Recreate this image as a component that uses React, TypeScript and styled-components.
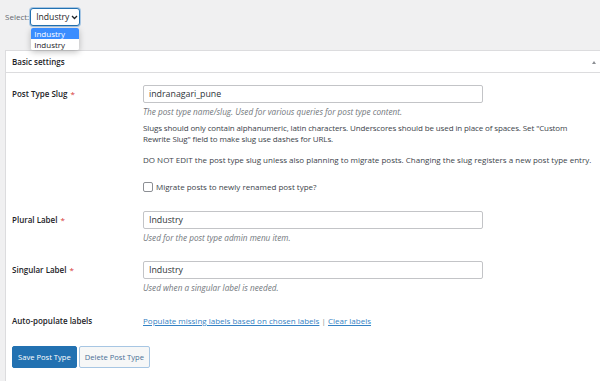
import React from 'react';
import styled, {createGlobalStyle} from 'styled-components';

const Global = createGlobalStyle`
	html, body {
		margin: 0;
		padding: 0;
		background: #f0f0f1;
	}
	body {
		font-family: 'Open Sans', 'Noto Sans', sans-serif;
		font-size: 8px;
		color: #1d2327;
	}
`;

const Page = styled.div`
	width: 600px;
	height: 381px;
	overflow: hidden;
	display: flex;
	flex-direction: column;
`;

const TopBar = styled.div`
	display: flex;
	gap: 1px;
	height: 50px;
	padding: 8px 0 0 5px;
	box-sizing: border-box;
	align-items: flex-start;
	color: #646970;
`;

const SelectLabel = styled.span`
	line-height: 18px;
`;

const SelectWrap = styled.div`
	position: relative;
`;

const SelectBox = styled.div`
	width: 50px;
	height: 18px;
	box-sizing: border-box;
	border: 1px solid #2271b1;
	box-shadow: 0 0 0 1px #a7c6e3;
	border-radius: 3px;
	background: #fff;
	display: flex;
	align-items: center;
	gap: 2px;
	padding: 0 0 0 5px;
	color: #1d2327;
	font-size: 8.6px;
`;

const DropList = styled.ul`
	position: absolute;
	top: 20px;
	left: 1px;
	width: 48px;
	margin: 0;
	padding: 0;
	list-style: none;
	background: #fff;
	box-shadow: 0 2px 6px rgba(0, 0, 0, 0.25);
	border-radius: 2px;
	z-index: 5;
	overflow: hidden;
`;

const DropItem = styled.li<{$active?: boolean}>`
	height: 11px;
	line-height: 11px;
	padding-left: 3px;
	background: ${p => (p.$active ? '#3a8dff' : '#fff')};
	color: ${p => (p.$active ? '#fff' : '#1d2327')};
`;

const Panel = styled.div`
	flex: 1;
	margin-left: 5px;
	background: #fff;
	border-top: 1px solid #dcdcde;
	border-left: 1px solid #dcdcde;
`;

const PanelHead = styled.div`
	height: 21px;
	display: flex;
	align-items: center;
	justify-content: space-between;
	padding: 0 4px 0 6px;
	border-bottom: 1px solid #dcdcde;
	font-weight: 600;
`;

const Toggle = styled.span`
	width: 0;
	height: 0;
	border-left: 2.5px solid transparent;
	border-right: 2.5px solid transparent;
	border-bottom: 3px solid #8c8f94;
	margin-top: 1px;
`;

const Body = styled.div`
	padding: 12px 6px 0 6px;
`;

const Row = styled.div<{$gap?: number}>`
	display: grid;
	grid-template-columns: 131px 1fr;
	align-items: start;
	margin-bottom: ${p => p.$gap ?? 0}px;
`;

const Label = styled.div`
	font-weight: 600;
	line-height: 18px;
`;

const Req = styled.span`
	color: #d63638;
	margin-left: 3px;
	font-weight: 400;
`;

const Field = styled.div`
	display: flex;
	flex-direction: column;
	align-items: flex-start;
`;

const TextInput = styled.div`
	width: 340px;
	height: 18px;
	box-sizing: border-box;
	border: 1px solid #c3c4c7;
	border-radius: 2px;
	padding: 0 5px;
	line-height: 16px;
	font-size: 8.8px;
	color: #2c3338;
`;

const Desc = styled.p`
	margin: 3px 0 0;
	font-style: italic;
	font-size: 8.2px;
	color: #72777c;
	line-height: 12px;
`;

const Note = styled.p<{$mt: number; $tight?: boolean}>`
	margin: ${p => p.$mt}px 0 0;
	line-height: 11px;
	color: #3c434a;
	white-space: nowrap;
	letter-spacing: ${p => (p.$tight ? '-0.12px' : '0')};
`;

const Check = styled.label`
	display: flex;
	align-items: center;
	gap: 3px;
	margin-top: 16px;
	line-height: 12px;
	color: #3c434a;
`;

const Box = styled.span`
	width: 8px;
	height: 8px;
	border: 1px solid #8c8f94;
	border-radius: 2px;
	background: #fff;
`;

const Links = styled.div`
	line-height: 18px;
	color: #8c8f94;
`;

const A = styled.a`
	color: #3582c4;
	text-decoration: underline;
`;

const Buttons = styled.div`
	display: flex;
	gap: 2px;
	margin-top: 16px;
`;

const Button = styled.button<{$primary?: boolean}>`
	height: 22px;
	padding: 0 5px;
	font-family: inherit;
	font-size: 7.6px;
	border-radius: 2px;
	border: 1px solid ${p => (p.$primary ? '#2271b1' : '#a7c6e3')};
	background: ${p => (p.$primary ? '#2271b1' : '#f6f7f7')};
	color: ${p => (p.$primary ? '#fff' : '#4a6f96')};
`;

const Chevron = () => (
	<svg width="7" height="5" viewBox="0 0 7 5">
		<path d="M1 1l2.5 2.5L6 1" fill="none" stroke="#1d2327" strokeWidth="1.3" />
	</svg>
);

export default function App() {
	return (
		<Page>
			<Global />
			<TopBar>
				<SelectLabel>Select:</SelectLabel>
				<SelectWrap>
					<SelectBox>
						Industry <Chevron />
					</SelectBox>
					<DropList>
						<DropItem $active>Industry</DropItem>
						<DropItem>Industry</DropItem>
					</DropList>
				</SelectWrap>
			</TopBar>
			<Panel>
				<PanelHead>
					Basic settings
					<Toggle />
				</PanelHead>
				<Body>
					<Row $gap={18}>
						<Label>
							Post Type Slug<Req>*</Req>
						</Label>
						<Field>
							<TextInput>indranagari_pune</TextInput>
							<Desc>The post type name/slug. Used for various queries for post type content.</Desc>
							<Note $mt={4} $tight>
								Slugs should only contain alphanumeric, latin characters. Underscores should be used in
								place of spaces. Set "Custom
								<br />
								Rewrite Slug" field to make slug use dashes for URLs.
							</Note>
							<Note $mt={10}>
								DO NOT EDIT the post type slug unless also planning to migrate posts. Changing the slug
								registers a new post type entry.
							</Note>
							<Check>
								<Box />
								Migrate posts to newly renamed post type?
							</Check>
						</Field>
					</Row>
					<Row $gap={17}>
						<Label>
							Plural Label<Req>*</Req>
						</Label>
						<Field>
							<TextInput>Industry</TextInput>
							<Desc>Used for the post type admin menu item.</Desc>
						</Field>
					</Row>
					<Row $gap={18}>
						<Label>
							Singular Label<Req>*</Req>
						</Label>
						<Field>
							<TextInput>Industry</TextInput>
							<Desc>Used when a singular label is needed.</Desc>
						</Field>
					</Row>
					<Row>
						<Label>Auto-populate labels</Label>
						<Links>
							<A>Populate missing labels based on chosen labels</A> | <A>Clear labels</A>
						</Links>
					</Row>
					<Buttons>
						<Button $primary>Save Post Type</Button>
						<Button>Delete Post Type</Button>
					</Buttons>
				</Body>
			</Panel>
		</Page>
	);
}
